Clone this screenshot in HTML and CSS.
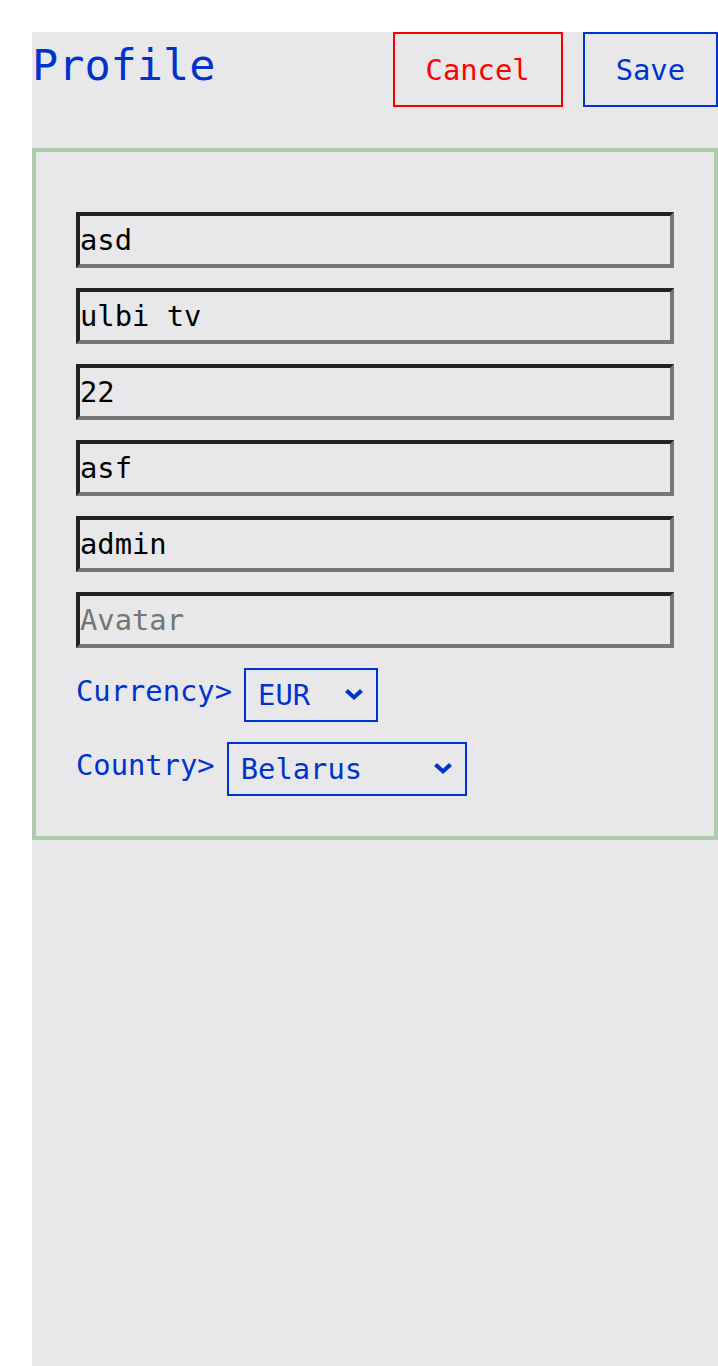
FILE: index.html
```html
<!DOCTYPE html>
<html lang="en">
<head>
<meta charset="utf-8">
<title>Profile</title>
<link rel="stylesheet" href="styles.css">
</head>
<body>
<div class="page">
  <div class="header">
    <h1 class="title">Profile</h1>
    <div class="actions">
      <button class="btn btn-cancel" type="button">Cancel</button>
      <button class="btn btn-save" type="button">Save</button>
    </div>
  </div>
  <div class="card">
    <input class="field" type="text" value="asd" placeholder="First name">
    <input class="field" type="text" value="ulbi tv" placeholder="Last name">
    <input class="field" type="text" value="22" placeholder="Age">
    <input class="field" type="text" value="asf" placeholder="City">
    <input class="field" type="text" value="admin" placeholder="Username">
    <input class="field" type="text" value="" placeholder="Avatar">
    <div class="row">
      <label class="row-label" for="currency">Currency&gt;</label>
      <span class="select-wrap">
        <select id="currency" class="select select-currency">
          <option>EUR</option>
          <option>RUB</option>
          <option>USD</option>
        </select>
        <svg class="chevron" width="18" height="11" viewBox="0 0 18 11" aria-hidden="true"><polygon points="0,3 3,0 9,5.8 15,0 18,3 9,11"/></svg>
      </span>
    </div>
    <div class="row">
      <label class="row-label" for="country">Country&gt;</label>
      <span class="select-wrap">
        <select id="country" class="select select-country">
          <option>Belarus</option>
          <option>Russia</option>
          <option>Ukraine</option>
          <option>Kazakhstan</option>
          <option>Armenia</option>
        </select>
        <svg class="chevron" width="18" height="11" viewBox="0 0 18 11" aria-hidden="true"><polygon points="0,3 3,0 9,5.8 15,0 18,3 9,11"/></svg>
      </span>
    </div>
  </div>
</div>
</body>
</html>
```
FILE: styles.css
```css
html, body {
  margin: 0;
  padding: 0;
  background: #ffffff;
}

body {
  font-family: "DejaVu Sans Mono", monospace;
}

.page {
  margin: 32px 0 0 32px;
  min-height: calc(100vh - 32px);
  background: #e8e8ea;
  display: flex;
  flex-direction: column;
}

.header {
  display: flex;
  justify-content: space-between;
  align-items: flex-start;
  margin-bottom: 41px;
}

.title {
  margin: 8px 0 0 0;
  font-size: 43.5px;
  font-weight: normal;
  line-height: normal;
  color: #0033cc;
}

.actions {
  display: flex;
  gap: 20px;
}

.btn {
  box-sizing: border-box;
  height: 75px;
  padding: 0 31px;
  background: transparent;
  font-family: "DejaVu Sans Mono", monospace;
  font-size: 28.8px;
  line-height: normal;
  cursor: pointer;
}

.btn-cancel {
  border: 2px solid #ff0000;
  color: #ff0000;
}

.btn-save {
  border: 2px solid #0033cc;
  color: #0033cc;
}

.card {
  border: 4px solid #aecbae;
  padding: 60px 40px 40px;
  display: flex;
  flex-direction: column;
  gap: 20px;
}

.field {
  box-sizing: border-box;
  width: 100%;
  height: 56px;
  margin: 0;
  padding: 0;
  border-width: 4px;
  border-style: solid;
  border-color: #222222 #767676 #767676 #222222;
  background: transparent;
  font-family: "DejaVu Sans Mono", monospace;
  font-size: 28.8px;
  color: #000000;
  outline: none;
}

.field::placeholder {
  color: #757575;
}

.row {
  display: flex;
  align-items: flex-start;
  gap: 12px;
}

.row-label {
  padding-top: 6px;
  font-size: 28.8px;
  line-height: normal;
  color: #0033cc;
}

.select-wrap {
  position: relative;
  display: inline-flex;
}

.select {
  box-sizing: border-box;
  height: 54px;
  margin: 0;
  padding: 0 0 0 12px;
  appearance: none;
  -webkit-appearance: none;
  border: 2px solid #0033cc;
  border-radius: 0;
  background: transparent;
  color: #0033cc;
  font-family: "DejaVu Sans Mono", monospace;
  font-size: 28.8px;
  outline: none;
}

.select-currency {
  width: 134px;
}

.select-country {
  width: 240px;
}

.chevron {
  position: absolute;
  right: 15px;
  top: 21px;
  fill: #0033cc;
  pointer-events: none;
}
```
